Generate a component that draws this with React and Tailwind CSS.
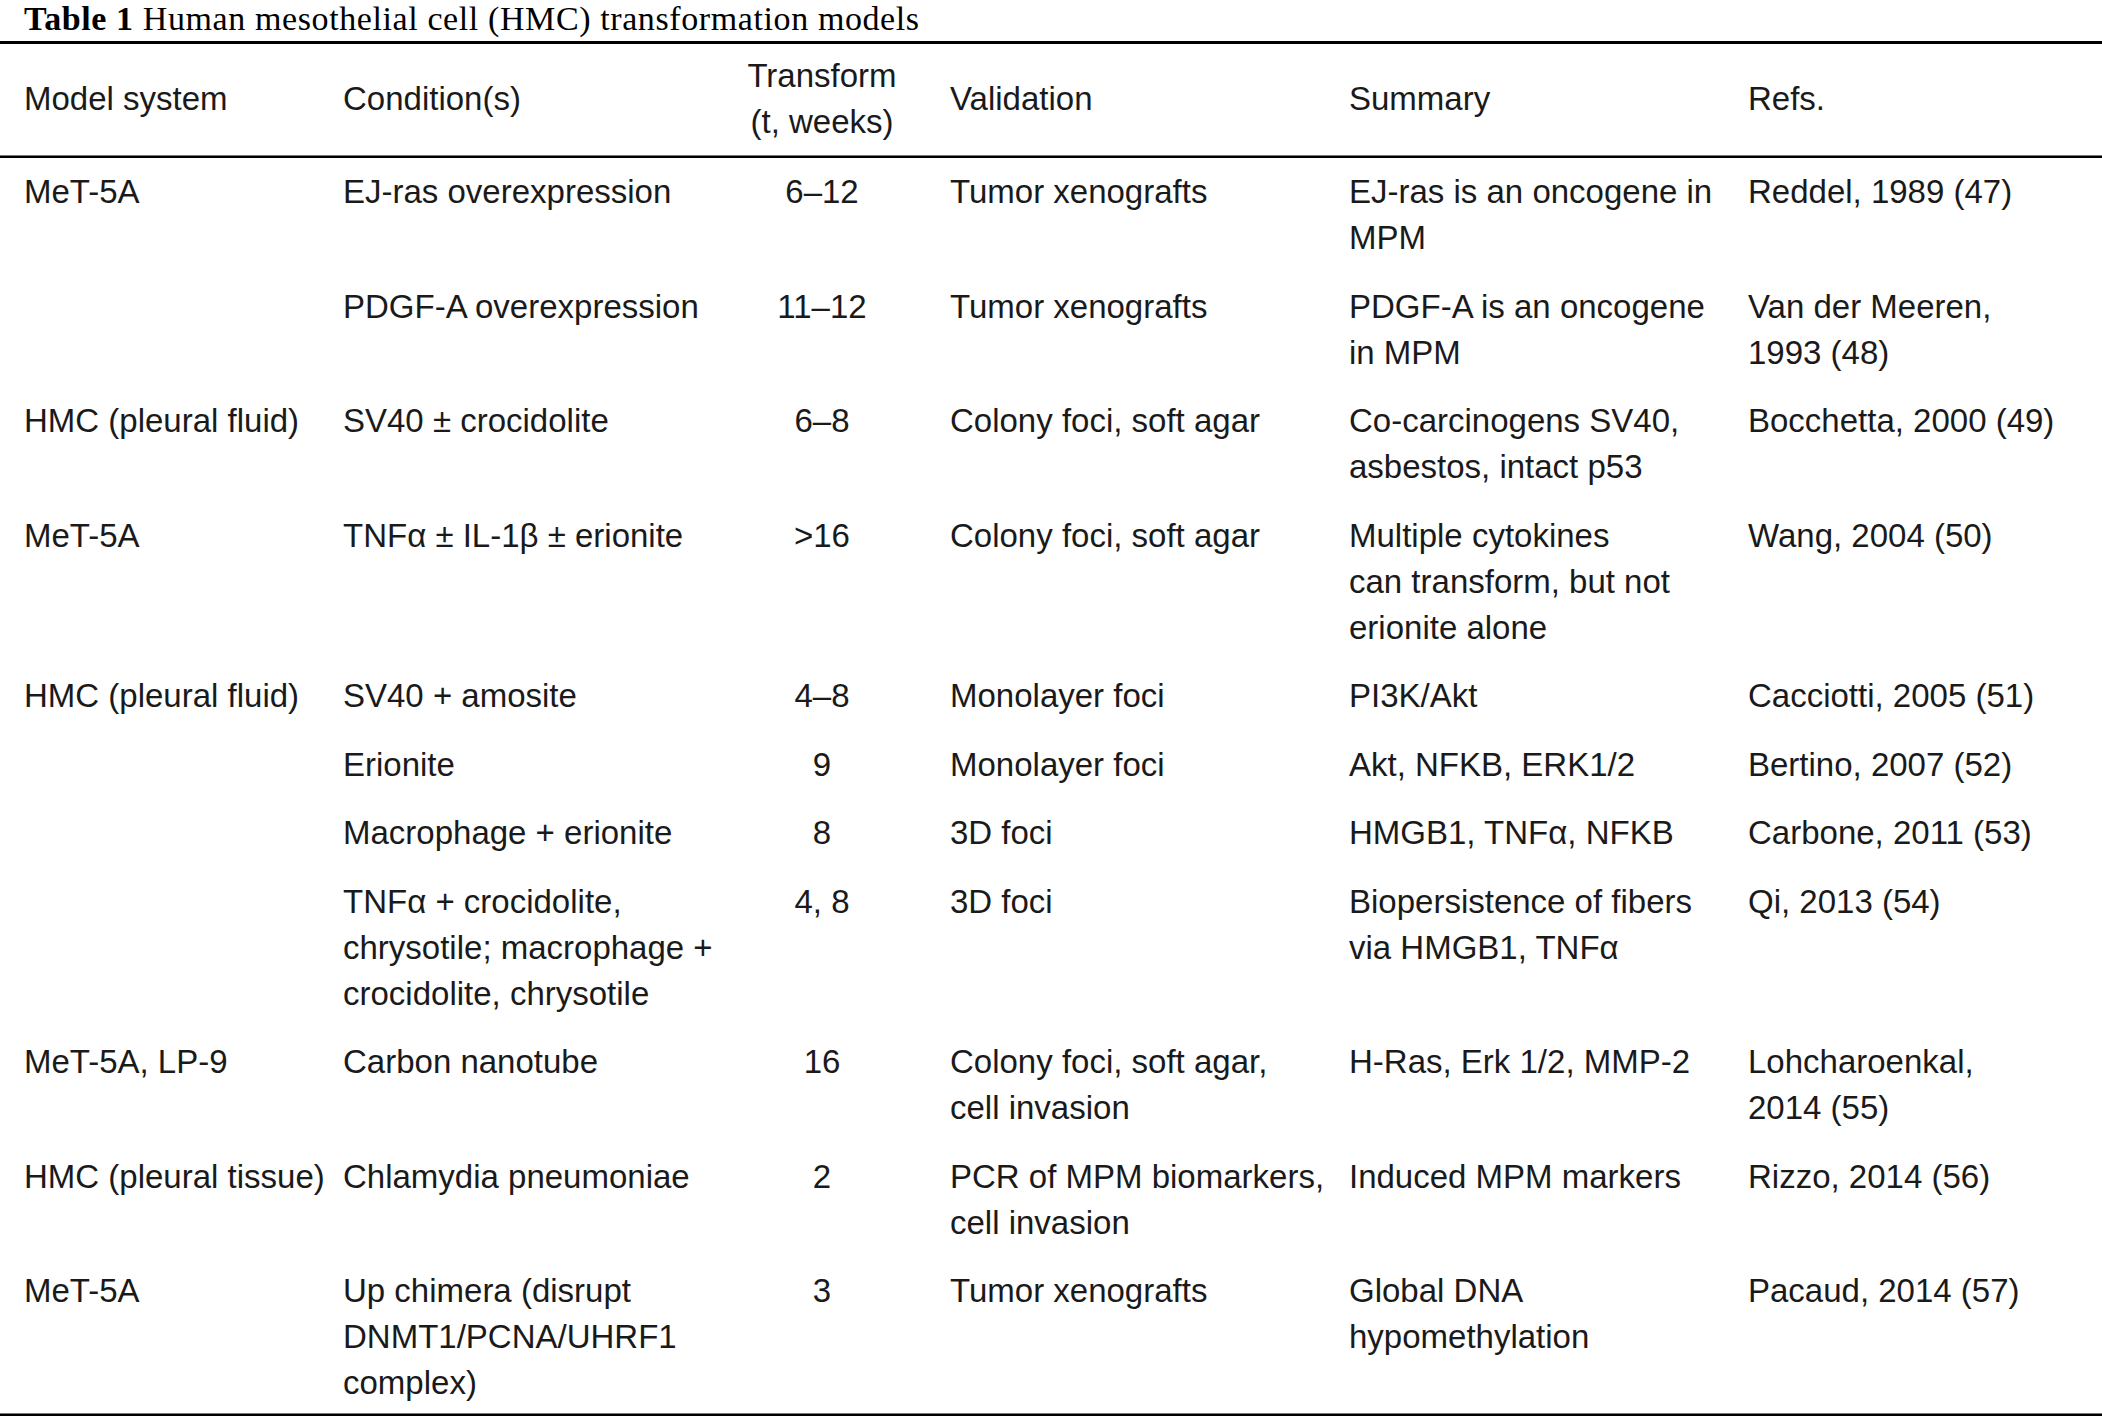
import React from 'react';

const rows = [
  { model: 'MeT-5A', cond: ['EJ-ras overexpression'], t: '6–12', val: ['Tumor xenografts'], sum: ['EJ-ras is an oncogene in', 'MPM'], refs: ['Reddel, 1989 (47)'] },
  { model: '', cond: ['PDGF-A overexpression'], t: '11–12', val: ['Tumor xenografts'], sum: ['PDGF-A is an oncogene', 'in MPM'], refs: ['Van der Meeren,', '1993 (48)'] },
  { model: 'HMC (pleural fluid)', cond: ['SV40 ± crocidolite'], t: '6–8', val: ['Colony foci, soft agar'], sum: ['Co-carcinogens SV40,', 'asbestos, intact p53'], refs: ['Bocchetta, 2000 (49)'] },
  { model: 'MeT-5A', cond: ['TNFα ± IL-1β ± erionite'], t: '>16', val: ['Colony foci, soft agar'], sum: ['Multiple cytokines', 'can transform, but not', 'erionite alone'], refs: ['Wang, 2004 (50)'] },
  { model: 'HMC (pleural fluid)', cond: ['SV40 + amosite'], t: '4–8', val: ['Monolayer foci'], sum: ['PI3K/Akt'], refs: ['Cacciotti, 2005 (51)'] },
  { model: '', cond: ['Erionite'], t: '9', val: ['Monolayer foci'], sum: ['Akt, NFKB, ERK1/2'], refs: ['Bertino, 2007 (52)'] },
  { model: '', cond: ['Macrophage + erionite'], t: '8', val: ['3D foci'], sum: ['HMGB1, TNFα, NFKB'], refs: ['Carbone, 2011 (53)'] },
  { model: '', cond: ['TNFα + crocidolite,', 'chrysotile; macrophage +', 'crocidolite, chrysotile'], t: '4, 8', val: ['3D foci'], sum: ['Biopersistence of fibers', 'via HMGB1, TNFα'], refs: ['Qi, 2013 (54)'] },
  { model: 'MeT-5A, LP-9', cond: ['Carbon nanotube'], t: '16', val: ['Colony foci, soft agar,', 'cell invasion'], sum: ['H-Ras, Erk 1/2, MMP-2'], refs: ['Lohcharoenkal,', '2014 (55)'] },
  { model: 'HMC (pleural tissue)', cond: ['Chlamydia pneumoniae'], t: '2', val: ['PCR of MPM biomarkers,', 'cell invasion'], sum: ['Induced MPM markers'], refs: ['Rizzo, 2014 (56)'] },
  { model: 'MeT-5A', cond: ['Up chimera (disrupt', 'DNMT1/PCNA/UHRF1', 'complex)'], t: '3', val: ['Tumor xenografts'], sum: ['Global DNA', 'hypomethylation'], refs: ['Pacaud, 2014 (57)'] },
];

const Lines = ({ items }) => (
  <>
    {items.map((line, i) => (
      <div key={i} className="whitespace-nowrap">{line}</div>
    ))}
  </>
);

const gridCols = 'grid grid-cols-[343px_378px_229px_399px_399px_1fr]';

const App = () => {
  return (
    <div className="w-[2102px] h-[1419px] bg-white text-[#1a1a1a] overflow-hidden">
      <div className="h-[36px] mb-[5px] pl-[24px] text-[34px] leading-[37px] tracking-[0.6px] text-black whitespace-nowrap" style={{ fontFamily: '"Liberation Serif", serif' }}>
        <span className="font-bold">Table 1</span> Human mesothelial cell (HMC) transformation models
      </div>
      <div className="h-[3px] bg-black" />
      <div className="text-[33px] leading-[46px]" style={{ fontFamily: '"Liberation Sans", Arial, sans-serif' }}>
        <div className={`${gridCols} items-center pt-[9px] pb-[10px]`}>
          <div className="pl-[24px] whitespace-nowrap">Model system</div>
          <div className="whitespace-nowrap">Condition(s)</div>
          <div className="text-center pr-[27px]">
            <div>Transform</div>
            <div>(t, weeks)</div>
          </div>
          <div>Validation</div>
          <div>Summary</div>
          <div>Refs.</div>
        </div>
        <div className="h-[3px] bg-black border-t border-[#777]" />
        <div className="flex flex-col gap-[22.5px] pt-[11px] pb-[7px]">
          {rows.map((r, i) => (
            <div key={i} className={`${gridCols} items-start`}>
              <div className="pl-[24px] whitespace-nowrap">{r.model}</div>
              <div><Lines items={r.cond} /></div>
              <div className="text-center pr-[27px]">{r.t}</div>
              <div><Lines items={r.val} /></div>
              <div><Lines items={r.sum} /></div>
              <div><Lines items={r.refs} /></div>
            </div>
          ))}
        </div>
        <div className="h-[3px] bg-black border-t border-[#777]" />
      </div>
    </div>
  );
};

export default App;
